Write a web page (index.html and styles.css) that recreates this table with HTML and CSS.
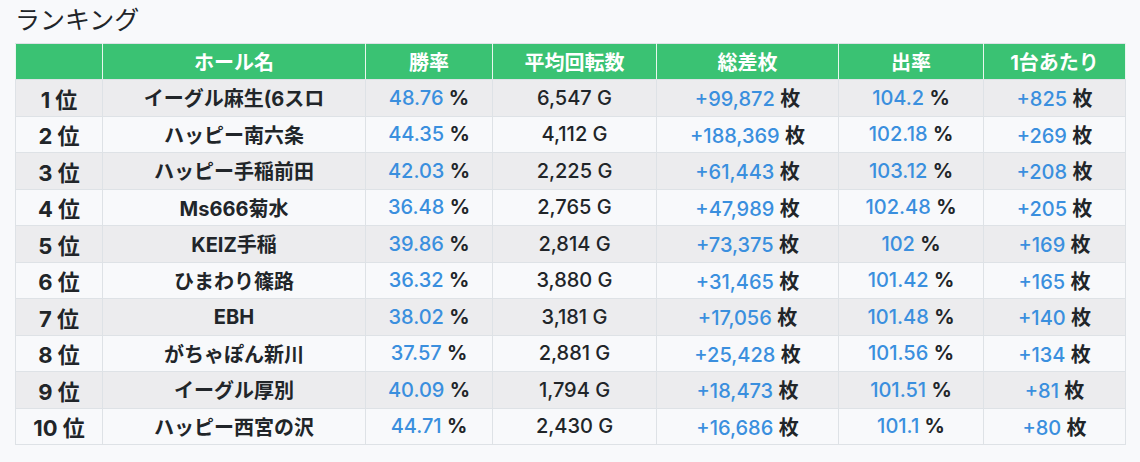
FILE: index.html
```html
<!DOCTYPE html>
<html lang="ja">
<head>
<meta charset="utf-8">
<link rel="stylesheet" href="styles.css">
</head>
<body>
<h2 class="title">ランキング</h2>
<table class="rank">
<colgroup>
<col class="c1"><col class="c2"><col class="c3"><col class="c4"><col class="c5"><col class="c6"><col class="c7">
</colgroup>
<thead>
<tr><th></th><th>ホール名</th><th>勝率</th><th>平均回転数</th><th>総差枚</th><th>出率</th><th>1台あたり</th></tr>
</thead>
<tbody>
<tr><td class="pos">1 位</td><td class="hall">イーグル麻生(6スロ</td><td><span class="num">48.76</span> <span class="u">%</span></td><td class="g">6,547 G</td><td><span class="num">+99,872</span> <span class="u">枚</span></td><td><span class="num">104.2</span> <span class="u">%</span></td><td><span class="num">+825</span> <span class="u">枚</span></td></tr>
<tr><td class="pos">2 位</td><td class="hall">ハッピー南六条</td><td><span class="num">44.35</span> <span class="u">%</span></td><td class="g">4,112 G</td><td><span class="num">+188,369</span> <span class="u">枚</span></td><td><span class="num">102.18</span> <span class="u">%</span></td><td><span class="num">+269</span> <span class="u">枚</span></td></tr>
<tr><td class="pos">3 位</td><td class="hall">ハッピー手稲前田</td><td><span class="num">42.03</span> <span class="u">%</span></td><td class="g">2,225 G</td><td><span class="num">+61,443</span> <span class="u">枚</span></td><td><span class="num">103.12</span> <span class="u">%</span></td><td><span class="num">+208</span> <span class="u">枚</span></td></tr>
<tr><td class="pos">4 位</td><td class="hall">Ms666菊水</td><td><span class="num">36.48</span> <span class="u">%</span></td><td class="g">2,765 G</td><td><span class="num">+47,989</span> <span class="u">枚</span></td><td><span class="num">102.48</span> <span class="u">%</span></td><td><span class="num">+205</span> <span class="u">枚</span></td></tr>
<tr><td class="pos">5 位</td><td class="hall">KEIZ手稲</td><td><span class="num">39.86</span> <span class="u">%</span></td><td class="g">2,814 G</td><td><span class="num">+73,375</span> <span class="u">枚</span></td><td><span class="num">102</span> <span class="u">%</span></td><td><span class="num">+169</span> <span class="u">枚</span></td></tr>
<tr><td class="pos">6 位</td><td class="hall">ひまわり篠路</td><td><span class="num">36.32</span> <span class="u">%</span></td><td class="g">3,880 G</td><td><span class="num">+31,465</span> <span class="u">枚</span></td><td><span class="num">101.42</span> <span class="u">%</span></td><td><span class="num">+165</span> <span class="u">枚</span></td></tr>
<tr><td class="pos">7 位</td><td class="hall">EBH</td><td><span class="num">38.02</span> <span class="u">%</span></td><td class="g">3,181 G</td><td><span class="num">+17,056</span> <span class="u">枚</span></td><td><span class="num">101.48</span> <span class="u">%</span></td><td><span class="num">+140</span> <span class="u">枚</span></td></tr>
<tr><td class="pos">8 位</td><td class="hall">がちゃぽん新川</td><td><span class="num">37.57</span> <span class="u">%</span></td><td class="g">2,881 G</td><td><span class="num">+25,428</span> <span class="u">枚</span></td><td><span class="num">101.56</span> <span class="u">%</span></td><td><span class="num">+134</span> <span class="u">枚</span></td></tr>
<tr><td class="pos">9 位</td><td class="hall">イーグル厚別</td><td><span class="num">40.09</span> <span class="u">%</span></td><td class="g">1,794 G</td><td><span class="num">+18,473</span> <span class="u">枚</span></td><td><span class="num">101.51</span> <span class="u">%</span></td><td><span class="num">+81</span> <span class="u">枚</span></td></tr>
<tr><td class="pos">10 位</td><td class="hall">ハッピー西宮の沢</td><td><span class="num">44.71</span> <span class="u">%</span></td><td class="g">2,430 G</td><td><span class="num">+16,686</span> <span class="u">枚</span></td><td><span class="num">101.1</span> <span class="u">%</span></td><td><span class="num">+80</span> <span class="u">枚</span></td></tr>
</tbody>
</table>
</body>
</html>
```
FILE: styles.css
```css
html, body {
  margin: 0;
  padding: 0;
  background: #f8f9fb;
}
body {
  font-family: "Inter", "Noto Sans CJK JP", sans-serif;
  color: #212529;
}
.title {
  margin: 0 0 7px 15px;
  font-family: "Noto Sans CJK JP", sans-serif;
  font-size: 25px;
  font-weight: 400;
  line-height: 36px;
  color: #212529;
}
.rank {
  margin-left: 15px;
  width: 1110px;
  border-collapse: collapse;
  table-layout: fixed;
  font-size: 20px;
}
.c1 { width: 87px; }
.c2 { width: 263px; }
.c3 { width: 127px; }
.c4 { width: 164px; }
.c5 { width: 182px; }
.c6 { width: 145px; }
.c7 { width: 142px; }
.rank th {
  background: #3ac273;
  color: #ffffff;
  font-size: 20px;
  font-weight: 700;
  height: 35px;
  padding: 0;
  text-align: center;
  border: 1px solid #dee2e6;
  border-left-color: #e8f6ee;
  border-right-color: #e8f6ee;
}
.rank td {
  height: 35.5px;
  padding: 0;
  text-align: center;
  border: 1px solid #dee2e6;
  font-weight: 500;
}
.rank tbody tr:nth-child(odd) td {
  background: #ececee;
}
.rank tbody tr:nth-child(even) td {
  background: #f8f9fb;
}
.rank td.pos, .rank td.hall {
  font-weight: 700;
}
.rank td.pos {
  font-size: 22px;
}
.num {
  color: #3a8fde;
  font-weight: 500;
}
.u {
  font-weight: 700;
}
```
